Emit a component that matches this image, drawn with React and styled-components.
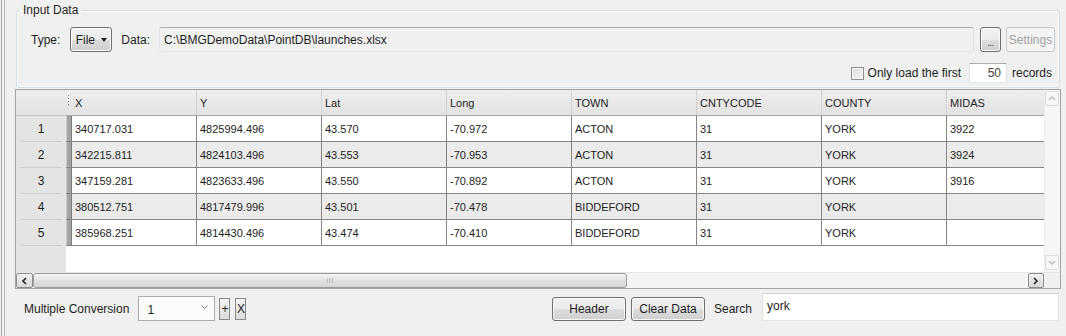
import React from "react";
import styled, { createGlobalStyle } from "styled-components";

const GlobalStyle = createGlobalStyle`
  html, body {
    margin: 0;
    padding: 0;
    background: #f0f0f0;
  }
  body {
    font-family: "Liberation Sans", Arial, sans-serif;
    font-size: 12px;
    color: #1e1e1e;
  }
`;

const Window = styled.div`
  width: 1066px;
  height: 336px;
  display: flex;
  background: #f0f0f0;
  overflow: hidden;
`;

const Edge = styled.div`
  width: 2px;
  margin-left: 1px;
  border-left: 1px solid #a5a5a5;
  border-right: 1px solid #b5b5b5;
  background: #f7f7f7;
  flex-shrink: 0;
`;

const Content = styled.div`
  flex: 1;
  display: flex;
  flex-direction: column;
  padding-left: 10px;
`;

const Group = styled.fieldset`
  margin: 3px 0 0 1px;
  padding: 0;
  width: 1044px;
  height: 85px;
  box-sizing: border-box;
  border: 1px solid #d5dfe5;
  border-radius: 3px;
  box-shadow: inset 0 0 0 1px #fbfbfb;
  flex-shrink: 0;
`;

const Legend = styled.legend`
  margin-left: 3px;
  padding: 0 3px;
  font-size: 12px;
  color: #1e1e1e;
`;

const GroupBody = styled.div`
  display: flex;
  flex-direction: column;
  padding: 10px 4px 0 14px;
`;

const Line = styled.div`
  display: flex;
  align-items: center;
  justify-content: ${(p) => (p.$end ? "flex-end" : "flex-start")};
  height: ${(p) => p.$h}px;
  margin-top: ${(p) => p.$mt || 0}px;
  padding-right: ${(p) => p.$pr || 0}px;
`;

const Label = styled.span`
  white-space: nowrap;
  margin-right: ${(p) => p.$mr || 0}px;
  margin-left: ${(p) => p.$ml || 0}px;
  font-size: ${(p) => p.$fs || 12}px;
  color: #1e1e1e;
`;

const AeroButton = styled.div`
  box-sizing: border-box;
  display: flex;
  align-items: center;
  justify-content: center;
  width: ${(p) => p.$w}px;
  height: ${(p) => p.$h}px;
  margin-left: ${(p) => p.$ml || 0}px;
  border: 1px solid ${(p) => (p.$disabled ? "#c4c8cb" : "#707070")};
  border-radius: 3px;
  background: ${(p) =>
    p.$disabled
      ? "#f4f4f4"
      : "linear-gradient(#f2f2f2 0%, #ebebeb 50%, #dddddd 51%, #cfcfcf 100%)"};
  box-shadow: inset 0 0 0 1px ${(p) => (p.$disabled ? "#f4f4f4" : "#fbfbfb")};
  color: ${(p) => (p.$disabled ? "#a2a2a2" : "#1e1e1e")};
  font-size: 12px;
  white-space: nowrap;
  flex-shrink: 0;
`;

const Caret = styled.span`
  display: inline-block;
  margin-left: 6px;
  width: 0;
  height: 0;
  border-left: 3.5px solid transparent;
  border-right: 3.5px solid transparent;
  border-top: 4px solid #222;
`;

const Dots = styled.span`
  font-size: 9px;
  letter-spacing: -0.5px;
  padding-top: 6px;
`;

const PathBox = styled.div`
  box-sizing: border-box;
  display: flex;
  align-items: center;
  height: 25px;
  flex: 1;
  margin-left: 9px;
  padding-left: 4px;
  border: 1px solid;
  border-color: #abadb3 #dbdfe6 #e3e9ef #e2e3ea;
  border-radius: 2px;
  background: #f0f0f0;
  font-size: 12px;
`;

const Check = styled.div`
  box-sizing: border-box;
  width: 13px;
  height: 13px;
  border: 1px solid #8e8f8f;
  background: linear-gradient(135deg, #dcdcdc, #f5f5f5);
  box-shadow: inset 0 0 0 1px #f4f4f4;
  margin-right: 4px;
`;

const NumBox = styled.div`
  box-sizing: border-box;
  width: 38px;
  height: 20px;
  margin: 0 5px 0 8px;
  padding-right: 5px;
  display: flex;
  align-items: center;
  justify-content: flex-end;
  border: 1px solid;
  border-color: #abadb3 #dbdfe6 #e3e9ef #e2e3ea;
  background: #fff;
  color: #444;
`;

const TableFrame = styled.div`
  margin-top: 1px;
  width: 1046px;
  height: 200px;
  box-sizing: border-box;
  border: 1px solid #a3a3a3;
  display: flex;
  flex-direction: column;
  background: #fff;
  flex-shrink: 0;
`;

const TableTop = styled.div`
  display: flex;
  height: 182px;
`;

const GridBody = styled.div`
  flex: 1;
  display: flex;
  overflow: hidden;
`;

const RowHeadCol = styled.div`
  width: 50px;
  flex-shrink: 0;
  background: #e4e4e4;
  display: flex;
  flex-direction: column;
`;

const Corner = styled.div`
  height: 26px;
  background: linear-gradient(#ececec, #e2e2e2);
  border-bottom: 1px solid #c9c9c9;
  box-sizing: border-box;
`;

const RowHead = styled.div`
  height: 26px;
  box-sizing: border-box;
  display: flex;
  align-items: center;
  justify-content: center;
  font-size: 12px;
  color: #1e1e1e;
  margin: 0 4px;
  border-bottom: 1px solid #cfcfcf;
`;

const DataCol = styled.div`
  flex: 1;
  overflow: hidden;
  background: #fff;
`;

const HeaderRow = styled.div`
  display: flex;
  height: 26px;
  box-sizing: border-box;
  background: linear-gradient(#eeeeee, #e3e3e3);
  border-bottom: 1px solid #a8a8a8;
`;

const Grip = styled.div`
  width: 6px;
  flex-shrink: 0;
  position: relative;
  &::before {
    content: "";
    position: absolute;
    left: 2px;
    top: 5px;
    width: 1px;
    height: 10px;
    background: repeating-linear-gradient(#8a8a8a 0 1px, transparent 1px 3px);
  }
`;

const HeadCell = styled.div`
  width: 125px;
  flex-shrink: 0;
  box-sizing: border-box;
  padding-left: 3px;
  border-right: 1px solid #d2d2d2;
  display: flex;
  align-items: center;
  font-size: 11px;
  color: #1e1e1e;
`;

const Row = styled.div`
  display: flex;
  height: 26px;
  box-sizing: border-box;
  background: ${(p) => (p.$alt ? "#ebebeb" : "#fff")};
  border-bottom: 1px solid #858585;
`;

const Selector = styled.div`
  width: 6px;
  flex-shrink: 0;
  box-sizing: border-box;
  background: #a4a4a4;
  border-left: 1px solid #cfcfcf;
  border-right: 1px solid #7c7c7c;
`;

const Cell = styled.div`
  width: 125px;
  flex-shrink: 0;
  box-sizing: border-box;
  padding-left: 3px;
  border-right: 1px solid #858585;
  display: flex;
  align-items: center;
  font-size: 11px;
  color: #1e1e1e;
  white-space: nowrap;
`;

const VScroll = styled.div`
  width: 16px;
  flex-shrink: 0;
  background: #f6f6f6;
  border-left: 1px solid #ececec;
  box-sizing: border-box;
  display: flex;
  flex-direction: column;
  justify-content: space-between;
  padding: 1px 0 2px;
`;

const ArrowBtn = styled.div`
  box-sizing: border-box;
  width: ${(p) => p.$w || 15}px;
  height: ${(p) => p.$h || 15}px;
  display: flex;
  align-items: center;
  justify-content: center;
  border: 1px solid ${(p) => (p.$off ? "#dcdcdc" : "#8e8f8f")};
  border-radius: 2px;
  background: ${(p) =>
    p.$off ? "#f7f7f7" : "linear-gradient(#f2f2f2, #d8d8d8)"};
  flex-shrink: 0;
`;

const HScrollRow = styled.div`
  display: flex;
  height: 16px;
  background: #f0f0f0;
  border-top: 1px solid #e6e6e6;
  box-sizing: border-box;
`;

const HTrack = styled.div`
  flex: 1;
  display: flex;
  align-items: stretch;
  background: #f4f4f4;
`;

const Thumb = styled.div`
  width: 594px;
  box-sizing: border-box;
  border: 1px solid #9c9c9c;
  border-radius: 3px;
  background: linear-gradient(#f4f4f4, #e0e0e0 55%, #d6d6d6);
  display: flex;
  align-items: center;
  justify-content: center;
  color: #a8a8a8;
  font-size: 7px;
  letter-spacing: 0.5px;
`;

const ScrollCorner = styled.div`
  width: 16px;
  background: #f0f0f0;
`;

const BottomBar = styled.div`
  display: flex;
  align-items: center;
  height: 29px;
  margin-top: 5px;
  padding-left: 9px;
`;

const Combo = styled.div`
  box-sizing: border-box;
  width: 77px;
  height: 25px;
  margin-left: 9px;
  border: 1px solid #acacac;
  background: #fbfbfb;
  display: flex;
  align-items: flex-end;
  padding: 0 6px 3px 8px;
  position: relative;
`;

const ComboChevron = styled.svg`
  position: absolute;
  right: 6px;
  top: 8px;
`;

const TinyButton = styled.div`
  box-sizing: border-box;
  width: 11px;
  height: 22px;
  margin-left: ${(p) => p.$ml}px;
  border: 1px solid #8a8a8a;
  background: linear-gradient(#f2f2f2, #dcdcdc);
  display: flex;
  align-items: center;
  justify-content: center;
  font-size: 12px;
`;

const Spacer = styled.div`
  flex: 1;
`;

const SearchInput = styled.div`
  box-sizing: border-box;
  width: 297px;
  height: 28px;
  margin: -3px 7px 0 10px;
  padding: 5px 0 0 4px;
  border: 1px solid;
  border-color: #d4d4d4 #e2e2e2 #e8e8e8 #e2e2e2;
  background: #fff;
  font-size: 12px;
`;

const columns = ["X", "Y", "Lat", "Long", "TOWN", "CNTYCODE", "COUNTY", "MIDAS"];

const rows = [
  ["340717.031", "4825994.496", "43.570", "-70.972", "ACTON", "31", "YORK", "3922"],
  ["342215.811", "4824103.496", "43.553", "-70.953", "ACTON", "31", "YORK", "3924"],
  ["347159.281", "4823633.496", "43.550", "-70.892", "ACTON", "31", "YORK", "3916"],
  ["380512.751", "4817479.996", "43.501", "-70.478", "BIDDEFORD", "31", "YORK", ""],
  ["385968.251", "4814430.496", "43.474", "-70.410", "BIDDEFORD", "31", "YORK", ""],
];

const Chevron = ({ dir, color = "#333" }) => {
  const pts = {
    up: "1,5 4,2 7,5",
    down: "1,2 4,5 7,2",
    left: "5,1 2,4 5,7",
    right: "2,1 5,4 2,7",
  }[dir];
  return (
    <svg width="8" height="8" viewBox="0 0 8 8">
      <polyline points={pts} fill="none" stroke={color} strokeWidth="1.6" />
    </svg>
  );
};

export default function App() {
  return (
    <>
      <GlobalStyle />
      <Window>
        <Edge />
        <Content>
          <Group>
            <Legend>Input Data</Legend>
            <GroupBody>
              <Line $h={25}>
                <Label $mr={10}>Type:</Label>
                <AeroButton $w={42} $h={25}>
                  File<Caret />
                </AeroButton>
                <Label $ml={9}>Data:</Label>
                <PathBox>C:\BMGDemoData\PointDB\launches.xlsx</PathBox>
                <AeroButton $w={21} $h={25} $ml={6}>
                  <Dots>...</Dots>
                </AeroButton>
                <AeroButton $w={49} $h={25} $ml={5} $disabled>
                  Settings
                </AeroButton>
              </Line>
              <Line $h={20} $mt={11} $end $pr={3}>
                <Check />
                <Label>Only load the first</Label>
                <NumBox>50</NumBox>
                <Label>records</Label>
              </Line>
            </GroupBody>
          </Group>

          <TableFrame>
            <TableTop>
              <GridBody>
                <RowHeadCol>
                  <Corner />
                  {rows.map((_, i) => (
                    <RowHead key={i}>{i + 1}</RowHead>
                  ))}
                </RowHeadCol>
                <DataCol>
                  <HeaderRow>
                    <Grip />
                    {columns.map((c) => (
                      <HeadCell key={c}>{c}</HeadCell>
                    ))}
                  </HeaderRow>
                  {rows.map((r, i) => (
                    <Row key={i} $alt={i % 2 === 1}>
                      <Selector />
                      {r.map((v, j) => (
                        <Cell key={j}>{v}</Cell>
                      ))}
                    </Row>
                  ))}
                </DataCol>
              </GridBody>
              <VScroll>
                <ArrowBtn $off $w={14}>
                  <Chevron dir="up" color="#c4c4c4" />
                </ArrowBtn>
                <ArrowBtn $off $w={14}>
                  <Chevron dir="down" color="#c4c4c4" />
                </ArrowBtn>
              </VScroll>
            </TableTop>
            <HScrollRow>
              <ArrowBtn $w={17} $h={15}>
                <Chevron dir="left" color="#222" />
              </ArrowBtn>
              <HTrack>
                <Thumb>III</Thumb>
              </HTrack>
              <ArrowBtn $w={16} $h={15}>
                <Chevron dir="right" color="#222" />
              </ArrowBtn>
              <ScrollCorner />
            </HScrollRow>
          </TableFrame>

          <BottomBar>
            <Label>Multiple Conversion</Label>
            <Combo>
              <span>1</span>
              <ComboChevron width="7" height="5" viewBox="0 0 7 5">
                <polyline points="0.5,0.5 3.5,3.5 6.5,0.5" fill="none" stroke="#777" strokeWidth="1" />
              </ComboChevron>
            </Combo>
            <TinyButton $ml={4}>+</TinyButton>
            <TinyButton $ml={5}>X</TinyButton>
            <Spacer />
            <AeroButton $w={74} $h={24}>Header</AeroButton>
            <AeroButton $w={74} $h={24} $ml={5}>Clear Data</AeroButton>
            <Label $ml={9}>Search</Label>
            <SearchInput>york</SearchInput>
          </BottomBar>
        </Content>
      </Window>
    </>
  );
}
